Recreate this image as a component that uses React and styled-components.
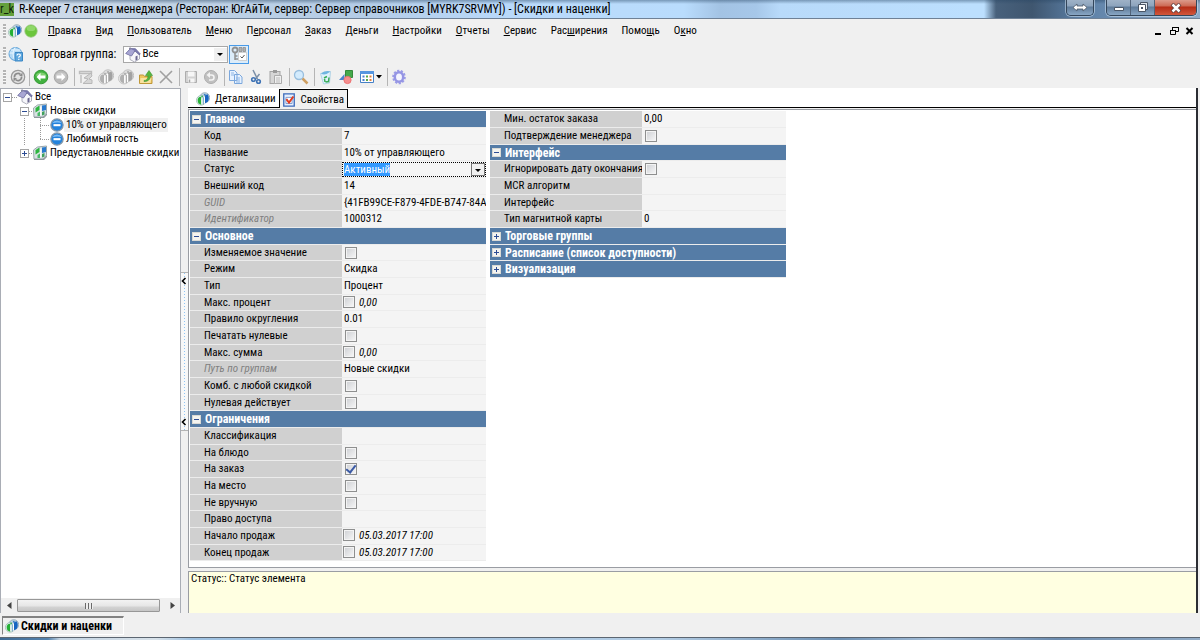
import React, { useState } from "react";
import styled, { createGlobalStyle, css } from "styled-components";

const colors = {
  face: "#f0f0f0",
  header: "#557ca6",
  name: "#d0d0d0",
  value: "#f4f4f4",
  hint: "#ffffe1",
  line: "#9a9da3",
};

const GlobalStyle = createGlobalStyle`
  * {
    box-sizing: border-box;
  }

  body {
    margin: 0;
    background: ${colors.face};
    color: #000;
    font-family: "Roboto Condensed", Roboto, "Liberation Sans", sans-serif;
    font-size: 11px;
    line-height: 14px;
  }

  button, input, select {
    font: inherit;
    color: inherit;
    margin: 0;
  }

  svg {
    flex: none;
  }
`;

const Window = styled.div`
  min-height: 100vh;
  display: flex;
  flex-direction: column;
  overflow: hidden;
`;

const TitleBar = styled.header`
  height: 19px;
  display: flex;
  flex: none;
  align-items: center;
  gap: 5px;
  border-bottom: 1px solid #6f8196;
  background:
    linear-gradient(180deg, rgba(40, 70, 100, 0.45) 0, rgba(255, 255, 255, 0) 4px),
    linear-gradient(90deg, #d3dfec 0%, #c3d4e6 12%, #b4cce6 30%, #b9d9fa 42%, #b9dcfd 57%,
      #a3c3e4 60%, #a6c7e9 63%, #b8dafa 65%, #bcdffe 81%, #bcdffe 82%, #48617c 83%, #3f566f 86%,
      #5b7fa6 90%, #8fabc8 100%);
`;

const AppBadge = styled.span`
  width: 14px;
  height: 13px;
  background: #64a03c;
  color: #10240a;
  font-size: 12px;
  line-height: 12px;
  overflow: hidden;
`;

const Title = styled.h1`
  flex: 1;
  margin: 0;
  font-size: 12px;
  font-weight: 400;
  line-height: 18px;
  white-space: nowrap;
`;

const Caption = styled.div`
  display: flex;
  align-self: flex-start;
  height: 16px;
  margin-right: ${(p) => p.$end || 0}px;
  border: 1px solid #34465a;
  border-top: 0;
  border-radius: 0 0 5px 5px;
  box-shadow: 0 0 0 1px rgba(220, 235, 250, 0.5);
  overflow: hidden;
`;

const CaptionButton = styled.button`
  width: ${(p) => p.$w}px;
  padding: 0;
  border: 0;
  border-right: 1px solid #52647a;
  background: linear-gradient(180deg, #9fb2c7 0, #8da4bd 6px, #5f7b99 7px, #88a6c4 100%);
  display: flex;
  align-items: center;
  justify-content: center;

  &:last-child {
    border-right: 0;
  }

  ${(p) =>
    p.$close &&
    css`
      background: linear-gradient(180deg, #dc9a8b 0, #cd6a55 6px, #b52c16 7px, #d1573c 100%);
    `}
`;

const MenuBar = styled.nav`
  height: 24px;
  display: flex;
  flex: none;
  align-items: center;
  padding: 0 4px 0 2px;
`;

const Grip = styled.span`
  width: 3px;
  height: 14px;
  margin: 0 2px 0 1px;
  background: repeating-linear-gradient(180deg, #b4b4b4 0 2px, #f8f8f8 2px 3px);
`;

const MenuIcons = styled.span`
  display: flex;
  align-items: center;
  gap: 2px;
  margin-right: 3px;
`;

const MenuItem = styled.button`
  padding: 0 7px;
  border: 0;
  background: none;
  line-height: 16px;
`;

const Spacer = styled.span`
  flex: 1;
`;

const ChildControls = styled.span`
  display: flex;
  gap: 4px;
`;

const PlainButton = styled.button`
  width: 12px;
  height: 12px;
  padding: 0;
  border: 0;
  background: none;
  display: flex;
`;

const GroupBar = styled.div`
  height: 22px;
  display: flex;
  flex: none;
  align-items: center;
  padding-left: 2px;
`;

const GroupLabel = styled.label`
  margin: 0 7px 0 8px;
  font-size: 12px;
`;

const SelectBox = styled.span`
  position: relative;
  width: 105px;
  height: 17px;
  display: flex;

  select {
    width: 100%;
    padding: 0 18px 0 18px;
    appearance: none;
    border: 1px solid #a8a8a8;
    border-radius: 0;
    background: #fff;
    line-height: 14px;
  }
`;

const SelectIcon = styled.span`
  position: absolute;
  top: 1px;
  left: 2px;
  pointer-events: none;
`;

const SelectArrow = styled.span`
  position: absolute;
  top: 2px;
  right: 1px;
  width: 13px;
  height: 13px;
  background: #f0f0f0;
  pointer-events: none;

  &::after {
    content: "";
    position: absolute;
    top: 5px;
    left: 3px;
    border: 3px solid transparent;
    border-top-color: #000;
    border-bottom: 0;
  }
`;

const PressedButton = styled.button`
  width: 20px;
  height: 19px;
  margin-left: 1px;
  padding: 0;
  border: 1px solid #4a9be8;
  background: #dcecf9;
  display: flex;
  align-items: center;
  justify-content: center;
`;

const ToolBar = styled.div`
  height: 23px;
  display: flex;
  flex: none;
  align-items: center;
  padding-left: 2px;
`;

const ToolGroup = styled.div`
  display: flex;
  padding-right: 1px;

  & + & {
    border-left: 1px solid #b5b5b5;
    padding: 0 3px 0 1px;
  }
`;

const ToolButton = styled.button`
  width: ${(p) => (p.$wide ? 28 : 20)}px;
  height: 18px;
  padding: 0;
  border: 0;
  background: none;
  display: flex;
  align-items: center;
  justify-content: center;
`;

const Main = styled.main`
  flex: 1;
  display: flex;
  padding-right: 2px;
`;

const Sidebar = styled.aside`
  width: 181px;
  flex: none;
  display: flex;
  flex-direction: column;
  justify-content: space-between;
  border: 1px solid #a9adb5;
  border-bottom: 0;
  background: #fff;
`;

const Tree = styled.ul`
  list-style: none;
  margin: 0;
  padding: 1px 0 0 2px;

  ul {
    list-style: none;
    margin: 0 0 0 7px;
    padding: 0 0 0 10px;
  }
`;

const TreeRow = styled.div`
  height: 14px;
  display: flex;
  align-items: center;
  white-space: nowrap;

  > * {
    flex: none;
  }
`;

const TreeToggle = styled.button`
  width: 9px;
  height: 9px;
  padding: 0;
  border: 0;
  background: none;
  display: flex;
`;

const Dots = styled.span`
  width: ${(p) => p.$w}px;
  height: 1px;
  background: repeating-linear-gradient(90deg, #999 0 1px, transparent 1px 2px);
`;

const Branch = styled.span`
  width: 10px;
  height: 14px;
  background:
    repeating-linear-gradient(90deg, #999 0 1px, transparent 1px 2px) 0 7px / 10px 1px no-repeat,
    repeating-linear-gradient(180deg, #999 0 1px, transparent 1px 2px) 0 0 / 1px
      ${(p) => (p.$last ? 7 : 14)}px no-repeat;
`;

const TreeChildren = styled.div`
  margin-left: 4px;
  padding-left: 16px;
  background: repeating-linear-gradient(180deg, #999 0 1px, transparent 1px 2px) 0 0 / 1px 100%
    no-repeat;
`;

const TreeLabel = styled.span`
  padding: 0 1px 0 2px;
  background: ${(p) => (p.$selected ? "#f0f0f0" : "none")};
`;

const ScrollRow = styled.div`
  height: 15px;
  display: flex;
  align-items: center;
  background: #f0f0f0;
`;

const ScrollArrow = styled.button`
  width: 16px;
  height: 14px;
  padding: 0;
  border: 0;
  background: none;
  display: flex;
  align-items: center;
  justify-content: center;
`;

const Thumb = styled.div`
  flex: 1;
  height: 13px;
  margin-right: 4px;
  border: 1px solid #979797;
  border-radius: 1px;
  background: linear-gradient(180deg, #f3f3f3 0, #e6e6e6 6px, #d3d3d3 7px, #c6c6c6 100%);
  display: flex;
  align-items: center;
  justify-content: center;

  &::after {
    content: "";
    width: 8px;
    height: 6px;
    background: repeating-linear-gradient(90deg, #6a6a6a 0 1px, #eee 1px 3px);
  }
`;

const Splitter = styled.div`
  width: 7px;
  flex: none;
  display: flex;
  flex-direction: column;
  justify-content: center;
  padding-top: 2px;
`;

const SplitHandle = styled.button`
  height: 159px;
  padding: 4px 0;
  border: 1px solid #b4b4b4;
  border-width: 1px 0;
  background:
    radial-gradient(circle, #8fc4f4 1px, transparent 1px) 1px 14px / 5px 3px repeat-y,
    #f8f8f8;
  display: flex;
  flex-direction: column;
  justify-content: space-between;
`;

const Content = styled.section`
  flex: 1;
  min-width: 0;
  display: flex;
  flex-direction: column;
  border-right: 2px solid #2b2d33;
`;

const Tabs = styled.div`
  height: 20px;
  flex: none;
  display: flex;
  align-items: flex-end;
  background: #fff;
  border-bottom: 1px solid #000;
`;

const Tab = styled.button`
  height: 18px;
  padding: 2px 3px 0 8px;
  border: 0;
  background: #fff;
  display: flex;
  align-items: center;
  gap: 5px;

  ${(p) =>
    p.$active &&
    css`
      height: 19px;
      margin-bottom: -1px;
      padding: 1px 3px 0 2px;
      border: 1px solid #000;
      border-bottom: 0;
      background: ${colors.face};
    `}
`;

const Properties = styled.div`
  flex: 1;
  margin-top: 1px;
  padding: 1px 0 0 1px;
  display: flex;
  align-items: flex-start;
  gap: 4px;
  background: #fff;
  border: 1px solid ${colors.line};
  border-right: 0;
`;

const Table = styled.table`
  width: 296px;
  table-layout: fixed;
  border-spacing: 0;

  tr {
    height: 17px;
  }

  tr:nth-child(3n) {
    height: 16px;
  }

  th,
  td {
    padding: 0;
    text-align: left;
    line-height: 14px;
    white-space: nowrap;
    overflow: hidden;
    border-bottom: 1px solid #ececec;
  }
`;

const NameColumn = styled.col`
  width: 152px;
`;

const SectionCell = styled.th`
  background: ${colors.header};
  color: #fff;
`;

const SectionToggle = styled.button`
  width: 100%;
  height: 14px;
  padding: 0 0 0 2px;
  border: 0;
  background: none;
  color: inherit;
  font-size: 12px;
  font-weight: 700;
  line-height: 14px;
  display: flex;
  align-items: center;
  gap: 4px;
`;

const NameCell = styled.th`
  background: ${colors.name};
  font-weight: 400;

  label,
  span {
    display: block;
    padding-left: 14px;
  }

  ${(p) =>
    p.$readonly &&
    css`
      color: #808080;
      font-style: italic;
    `}
`;

const ValueCell = styled.td`
  background: ${colors.value};
`;

const ValueText = styled.span`
  display: block;
  padding-left: 2px;
  overflow: hidden;
`;

const CheckValue = styled.div`
  display: flex;
  align-items: flex-start;
  gap: 4px;
  padding-left: ${(p) => (p.$text ? 1 : 3)}px;
  font-style: italic;
`;

const Check = styled.input`
  appearance: none;
  width: 12px;
  height: 12px;
  border: 1px solid #8e8f8f;
  background: linear-gradient(135deg, #cdcfd3, #f8f8f8);
  box-shadow: inset 0 0 0 1px #f4f4f4;
  display: flex;
  align-items: center;
  justify-content: center;

  &:checked::after {
    content: "";
    width: 4px;
    height: 8px;
    margin-bottom: 2px;
    border: solid #3b5aa5;
    border-width: 0 2px 2px 0;
    transform: rotate(38deg);
  }
`;

const StatusField = styled.div`
  position: relative;
  display: flex;
  height: 15px;
  outline: 1px dotted #000;
  outline-offset: -1px;

  select {
    width: 100%;
    height: 15px;
    padding: 0;
    appearance: none;
    border: 0;
    background: none;
    color: transparent;
  }
`;

const SelectedText = styled.span`
  position: absolute;
  top: 1px;
  left: 2px;
  height: 13px;
  line-height: 13px;
  background: #3399ff;
  color: #fff;
  pointer-events: none;
`;

const DropMark = styled.span`
  position: absolute;
  right: 1px;
  top: 1px;
  width: 14px;
  height: 13px;
  border: 1px solid #777;
  background: #f0f0f0;
  display: flex;
  align-items: center;
  justify-content: center;
  pointer-events: none;

  &::after {
    content: "";
    margin-top: 2px;
    border: 3px solid transparent;
    border-top-color: #000;
    border-bottom: 0;
  }
`;

const Hint = styled.div`
  height: 42px;
  flex: none;
  margin-top: 3px;
  padding: 0 2px;
  background: ${colors.hint};
  border: 1px solid ${colors.line};
  border-width: 1px 0 0 1px;
`;

const WindowBar = styled.footer`
  height: 24px;
  flex: none;
  padding: 3px 2px;
`;

const WindowTab = styled.button`
  width: 122px;
  height: 19px;
  padding: 1px 2px;
  border: 1px solid #fff;
  border-top: 2px solid #828282;
  border-left: 1px solid #828282;
  background: #f0f0f0;
  font-size: 12px;
  font-weight: 700;
  display: flex;
  align-items: center;
  gap: 2px;
`;

const Taskbar = styled.div`
  height: 3px;
  flex: none;
  border-top: 1px solid #5c6671;
  background: linear-gradient(90deg, #3e6a94 0, #5482ad 4%, #c4d4e2 5%, #d8e2ea 13%, #9fc2e2 16%,
    #b4cde4 55%, #6e91b4 70%, #a7c0da 78%, #6c8caf 88%, #93adc8 100%);
`;

const Svg = ({ size = 16, children, ...rest }) => (
  <svg width={size} height={size} viewBox="0 0 16 16" fill="none" aria-hidden="true" {...rest}>
    {children}
  </svg>
);

const PairIcon = ({ gray, size = 16 }) => (
  <Svg size={size}>
    <circle cx="10" cy="6.500" r="5.700" fill={gray ? "#dedede" : "#c3d8e4"} stroke={gray ? "#c0c0c0" : "#93a9b8"} />
    <circle cx="6" cy="9.500" r="5.500" fill={gray ? "#e6e6e6" : "#dcefe8"} stroke={gray ? "#c6c6c6" : "#a3bdb9"} />
    <path d="M5 5.500C2 5.500 1 10 3 13l3 1.500V6z" fill={gray ? "#b0b0b0" : "#25b035"} />
    <path d="M10 4l3-1.500c2 1.500 2 6 .5 8.500L10 13z" fill={gray ? "#a2a2a2" : "#1765c1"} />
    <path d="M7 7v7M9.500 5v8" stroke="#fff" strokeWidth="1.500" />
    <path d="M8.300 6v8" stroke={gray ? "#999" : "#3f7fae"} strokeWidth=".9" />
    <circle cx="7" cy="5" r="1.100" fill={gray ? "#aaa" : "#3fae6d"} />
    <circle cx="10" cy="3" r="1.100" fill={gray ? "#aaa" : "#3c7ec4"} />
  </Svg>
);

const FolderPairIcon = () => (
  <Svg>
    <path d="M1.500 5l4-3L14.500 1v9l-3.500 4H2z" fill="#d9e2e4" stroke="#9aa6ac" />
    <path d="M2 14h9.500l3.500-4v2l-3 3H2z" fill="#8d989c" />
    <path d="M3.500 5l4-2.500V7l-4 2.500z" fill="#2db53f" />
    <path d="M10 2.500l4-.5v5l-4 1z" fill="#2879ce" />
    <path d="M5.500 10l2.500-1.500V13H5.500z" fill="#49b868" />
    <path d="M10 9l2.500-1v3.500L10 12.500z" fill="#3fa05c" />
    <path d="M8.800 3.500v9" stroke="#fff" strokeWidth="1.300" />
  </Svg>
);

const HouseIcon = () => (
  <Svg>
    <path d="M5 8v4.500L9.500 15l5-3V7L10 4z" fill="#f6f6fa" stroke="#9a9cab" strokeWidth=".8" />
    <path d="M.7 6.500L5.500 1.500l5 .2 4.800 5.300-1.300.8-4-4L6.500 9z" fill="#7c7ab0" stroke="#5f5e93" strokeWidth=".7" />
    <path d="M1.200 6.300l4.500-4.300 3.800 1.700-3.200 5z" fill="#a8a6d3" />
    <path d="M10.500 9.500l2-1v4.200l-2 1.100z" fill="#6a6790" />
    <path d="M4 .8l2-.3v1.800L4 3z" fill="#85849f" />
  </Svg>
);

const MinusBallIcon = () => (
  <Svg size={14}>
    <circle cx="8" cy="8" r="7" fill="#2483dc" stroke="#8297aa" strokeWidth="1.500" />
    <path d="M2.500 6a6 5 0 0 1 11 0q-5-2-11 0z" fill="#7bbcf5" />
    <rect x="4" y="7" width="8" height="2.400" fill="#fff" />
  </Svg>
);

const BallIcon = () => (
  <Svg size={14}>
    <circle cx="8" cy="8" r="7" fill="#6cc63c" stroke="#8cc56e" />
    <ellipse cx="8" cy="5" rx="5" ry="3" fill="#8fd868" />
  </Svg>
);

const HelpGlobeIcon = () => (
  <Svg>
    <circle cx="7.500" cy="8" r="6.500" fill="#b4daf5" stroke="#5fa2d8" />
    <path d="M1.500 7h11M7 1.500q-4 6 0 13M3 4h9" stroke="#e7f5ff" />
    <path d="M7 6.500h7.500V15H7z" fill="#5ea8df" stroke="#3a86c4" />
    <path d="M9 9.500q0-1.500 1.700-1.500t1.600 1.500q0 .8-1.500 1.600v.7M10.800 12.800v1.200" stroke="#fff" strokeWidth="1.200" />
  </Svg>
);

const KeyCheckIcon = () => (
  <Svg>
    <circle cx="4" cy="4" r="2.500" stroke="#909090" strokeWidth="1.800" />
    <path d="M4 7v7M4 10h2.500M4 13h3" stroke="#909090" strokeWidth="1.500" />
    <path d="M8 1.500h3v4H8zM12 1.500h2.500v4H12z" fill="#b0b0b0" stroke="#8f8f8f" strokeWidth=".8" />
    <rect x="7.500" y="6.500" width="8" height="8" fill="#fff" stroke="#d2d2d2" />
    <path d="M9.500 10.500l1.500 1.500 2.500-3" stroke="#555" />
  </Svg>
);

const RefreshIcon = () => (
  <Svg>
    <circle cx="8" cy="8" r="6.700" fill="#e4e4e4" stroke="#9a9a9a" strokeWidth="1.300" />
    <path d="M4.500 8.500a3.500 3.500 0 0 1 6-3M11.500 7.500a3.500 3.500 0 0 1-6 3" stroke="#8b8b8b" strokeWidth="1.700" />
    <path d="M9 7h3.500V3.500zM7 9H3.500v3.500z" fill="#8b8b8b" />
  </Svg>
);

const ArrowBallIcon = ({ back }) => (
  <Svg>
    <circle cx="8" cy="8" r="6.800" fill={back ? "#42b13f" : "#bababa"} stroke={back ? "#359a35" : "#a6a6a6"} />
    <path d="M2.500 6.500a6 5 0 0 1 11 0q-5 1-11 0z" fill={back ? "#7fd06f" : "#cccccc"} />
    <path
      d={back ? "M3.500 8l4-4v2.500h5v3h-5V12z" : "M12.500 8l-4-4v2.500h-5v3h5V12z"}
      fill="#fff"
    />
  </Svg>
);

const TreeGrayIcon = () => (
  <Svg>
    <path d="M1.500 2.500h12v2h-12zM3 6v8" stroke="#bdbdbd" strokeWidth="1.400" />
    <path d="M13 4L6 9l4 1-5 4.500h9V11l-3-1 3-3z" fill="#d6d6d6" stroke="#b8b8b8" />
  </Svg>
);

const UpFolderIcon = () => (
  <Svg>
    <path d="M1.500 6h4l1 1.500h7.500v7h-12.500z" fill="#f0c760" stroke="#bf983a" />
    <path d="M2.500 9h11l-1 5H2z" fill="#f9e2a0" />
    <path d="M6 11.500c3 0 4-2 4-5H7.500L11 1.500l3.500 5H12.500c0 4-2.500 6-6.500 6z" fill="#55b83c" stroke="#3c9030" strokeWidth=".6" />
  </Svg>
);

const CrossIcon = () => (
  <Svg>
    <path d="M2 2l12 12M14 2L2 14" stroke="#a0a0a0" strokeWidth="1.600" />
  </Svg>
);

const SaveIcon = () => (
  <Svg>
    <path d="M2.500 2.500h11v11h-11z" fill="#d3d3d3" stroke="#adadad" />
    <path d="M5 2.500h6.500v5H5zM5 9.500h6.500v4H5z" fill="#f6f6f6" />
    <path d="M6.500 10.500v3" stroke="#a5a5a5" strokeWidth="1.500" />
  </Svg>
);

const UndoIcon = () => (
  <Svg>
    <circle cx="8" cy="8" r="6.500" fill="#c0c0c0" stroke="#adadad" />
    <path d="M6 11h2.500a2.500 2.500 0 0 0 0-5H5" stroke="#f3f3f3" strokeWidth="1.600" />
    <path d="M7 3v6L3.500 6z" fill="#f3f3f3" />
  </Svg>
);

const CopyIcon = () => (
  <Svg>
    <path d="M1.500 1.500h5l2.500 2.500v7.500h-7.500zM6.500 5.500h5l2.500 2.500v6.500h-7.500z" fill="#e6f1ff" stroke="#7ba7dc" />
    <path d="M3 4h3M3 6h3M8 9h4M8 11h4M8 13h4" stroke="#8db5e4" />
  </Svg>
);

const CutIcon = () => (
  <Svg>
    <path d="M5 1l4.500 9M11.500 5L7.500 10" stroke="#7c90a8" strokeWidth="1.500" />
    <circle cx="5.500" cy="10.500" r="1.800" stroke="#3f73b5" strokeWidth="1.600" />
    <circle cx="10.500" cy="12.500" r="1.800" stroke="#3f73b5" strokeWidth="1.600" />
  </Svg>
);

const PasteIcon = () => (
  <Svg>
    <rect x="2" y="2.500" width="10" height="12" fill="#d6d6d6" stroke="#a4a4a4" />
    <path d="M5 1h4v3H5z" fill="#9a9a9a" />
    <path d="M6.500 6.500h7v8h-7z" fill="#f0f0f0" stroke="#acacac" />
    <path d="M8 9h4M8 11h4M8 13h4" stroke="#bbb" />
  </Svg>
);

const SearchIcon = () => (
  <Svg>
    <circle cx="6" cy="6" r="4.500" fill="#d3ebfd" stroke="#98bede" strokeWidth="1.300" />
    <path d="M9.500 9.500l5 5" stroke="#cf9f62" strokeWidth="2.500" />
  </Svg>
);

const RecycleIcon = () => (
  <Svg>
    <path d="M2.500 4.500l10-2-1 11.500-6 1z" fill="#dff1fb" stroke="#b4d4e6" />
    <path d="M3 4.500q4 2.500 9.500-2-5-1.500-9.500 2z" fill="#6fb5e0" />
    <path d="M6 9l3-1.500M11 8.500l-.5 4-3 .5M6.500 10l.5 3" stroke="#3aae58" strokeWidth="1.500" />
  </Svg>
);

const ShapesIcon = () => (
  <Svg>
    <path d="M7.500 1.500h7v7h-7z" fill="#45a84b" stroke="#35893a" />
    <path d="M1 11l5.500-6v6z" fill="#4a80cd" />
    <circle cx="9.500" cy="11" r="3.600" fill="#f58e8e" stroke="#ee7272" />
  </Svg>
);

const GridIcon = () => (
  <Svg>
    <path d="M1.500 2.500h13v11h-13z" fill="#fff" stroke="#4681c6" />
    <path d="M1 2h14v3H1z" fill="#5596e0" />
    <path d="M3.500 6.500h2v2h-2zM3.500 10h2v2h-2z" fill="#4b7fd1" />
    <path d="M7 6.500h2v2H7zM7 10h2v2H7z" fill="#56a94a" />
    <path d="M10.500 6.500h2v2h-2zM10.500 10h2v2h-2z" fill="#e3803c" />
  </Svg>
);

const GearIcon = () => (
  <Svg>
    <ellipse cx="8" cy="8" rx="5.800" ry="6.300" stroke="#9c9ce6" strokeWidth="2" strokeDasharray="2.200 1.500" />
    <ellipse cx="8" cy="8" rx="4.200" ry="4.800" fill="#f4f4ff" stroke="#9595e4" strokeWidth="2.500" />
  </Svg>
);

const FormCheckIcon = () => (
  <Svg size={14}>
    <path d="M2 1h12v14H2z" fill="#e5efff" stroke="#3c6bbb" strokeWidth="1.500" />
    <path d="M4.500 5h7v7h-7z" fill="#fff" stroke="#7190c8" />
    <path d="M5 7l3 4 5-7" stroke="#e23b1f" strokeWidth="2.200" />
  </Svg>
);

const ToggleIcon = ({ open, boxed }) => (
  <svg width="9" height="9" viewBox="0 0 9 9" aria-hidden="true">
    <rect x=".5" y=".5" width="8" height="8" fill={boxed ? "#f4f4f0" : "#fff"} stroke={boxed ? "#d9d9d4" : "#a5a5a5"} />
    <path d="M2 4.500h5" stroke="#2d4c94" />
    {!open && <path d="M4.500 2v5" stroke="#2d4c94" />}
  </svg>
);

const Chevron = () => (
  <svg width="6" height="8" viewBox="0 0 6 8" fill="none" aria-hidden="true">
    <path d="M4.500 1L1.500 4l3 3" stroke="#000" strokeWidth="1.600" />
  </svg>
);

const menu = [
  ["", "П", "равка"],
  ["", "В", "ид"],
  ["", "П", "ользователь"],
  ["", "М", "еню"],
  ["П", "е", "рсонал"],
  ["", "З", "аказ"],
  ["", "Д", "еньги"],
  ["", "Н", "астройки"],
  ["", "О", "тчеты"],
  ["", "С", "ервис"],
  ["Рас", "ш", "ирения"],
  ["Помо", "щ", "ь"],
  ["О", "к", "но"],
];

const tools = [
  [["Обновить", <RefreshIcon />]],
  [["Назад", <ArrowBallIcon back />], ["Вперед", <ArrowBallIcon />]],
  [
    ["Дерево", <TreeGrayIcon />],
    ["Создать", <PairIcon gray />],
    ["Создать копию", <PairIcon gray />],
    ["На уровень выше", <UpFolderIcon />],
    ["Удалить", <CrossIcon />],
  ],
  [["Сохранить", <SaveIcon />], ["Отменить", <UndoIcon />]],
  [["Копировать", <CopyIcon />], ["Вырезать", <CutIcon />], ["Вставить", <PasteIcon />]],
  [["Найти", <SearchIcon />]],
  [["Корзина", <RecycleIcon />], ["Фигуры", <ShapesIcon />], ["Таблица", <GridIcon />, true]],
  [["Настройка", <GearIcon />]],
];

const leftRows = [
  { section: "Главное", open: true },
  { name: "Код", value: "7" },
  { name: "Название", value: "10% от управляющего" },
  { name: "Статус", status: "Активный" },
  { name: "Внешний код", value: "14" },
  { name: "GUID", value: "{41FB99CE-F879-4FDE-B747-84A", readonly: true },
  { name: "Идентификатор", value: "1000312", readonly: true },
  { section: "Основное", open: true },
  { name: "Изменяемое значение", check: true },
  { name: "Режим", value: "Скидка" },
  { name: "Тип", value: "Процент" },
  { name: "Макс. процент", check: true, value: "0,00" },
  { name: "Правило округления", value: "0.01" },
  { name: "Печатать нулевые", check: true },
  { name: "Макс. сумма", check: true, value: "0,00" },
  { name: "Путь по группам", value: "Новые скидки", readonly: true },
  { name: "Комб. с любой скидкой", check: true },
  { name: "Нулевая действует", check: true },
  { section: "Ограничения", open: true },
  { name: "Классификация" },
  { name: "На блюдо", check: true },
  { name: "На заказ", check: true, checked: true },
  { name: "На место", check: true },
  { name: "Не вручную", check: true },
  { name: "Право доступа" },
  { name: "Начало продаж", check: true, value: "05.03.2017 17:00" },
  { name: "Конец продаж", check: true, value: "05.03.2017 17:00" },
];

const rightRows = [
  { name: "Мин. остаток заказа", value: "0,00" },
  { name: "Подтверждение менеджера", check: true },
  { section: "Интерфейс", open: true },
  { name: "Игнорировать дату окончания", check: true },
  { name: "MCR алгоритм" },
  { name: "Интерфейс" },
  { name: "Тип магнитной карты", value: "0" },
  { section: "Торговые группы" },
  { section: "Расписание (список доступности)" },
  { section: "Визуализация" },
];

const Value = ({ row, id }) => {
  if (row.status) {
    return (
      <StatusField>
        <select id={id}>
          <option>{row.status}</option>
        </select>
        <SelectedText aria-hidden="true">{row.status}</SelectedText>
        <DropMark />
      </StatusField>
    );
  }
  if (row.check) {
    return (
      <CheckValue $text={row.value}>
        <Check type="checkbox" id={id} defaultChecked={row.checked} />
        {row.value}
      </CheckValue>
    );
  }
  return <ValueText>{row.value}</ValueText>;
};

const PropertyTable = ({ rows, prefix }) => (
  <Table>
    <colgroup>
      <NameColumn />
      <col />
    </colgroup>
    <tbody>
      {rows.map((row, i) => {
        const id = `${prefix}-${i}`;
        if (row.section) {
          return (
            <tr key={id}>
              <SectionCell colSpan={2}>
                <SectionToggle aria-expanded={!!row.open}>
                  <ToggleIcon open={row.open} boxed />
                  {row.section}
                </SectionToggle>
              </SectionCell>
            </tr>
          );
        }
        return (
          <tr key={id}>
            <NameCell scope="row" $readonly={row.readonly}>
              {row.check || row.status ? (
                <label htmlFor={id}>{row.name}</label>
              ) : (
                <span>{row.name}</span>
              )}
            </NameCell>
            <ValueCell>
              <Value row={row} id={id} />
            </ValueCell>
          </tr>
        );
      })}
    </tbody>
  </Table>
);

const App = () => {
  const [tab, setTab] = useState("properties");

  return (
    <>
      <GlobalStyle />
      <Window>
        <TitleBar>
          <AppBadge>r_k</AppBadge>
          <Title>
            R-Keeper 7 станция менеджера (Ресторан: ЮгАйТи, сервер: Сервер справочников
            [MYRK7SRVMY]) - [Скидки и наценки]
          </Title>
          <Caption $end={7}>
            <CaptionButton $w={26} aria-label="Развернуть на экраны">
              <svg width="16" height="9" viewBox="0 0 16 9">
                <path d="M1 4.500l4-3.500v2h6V1l4 3.500L11 8V6H5v2z" fill="#fff" stroke="#4a5666" strokeWidth=".8" />
              </svg>
            </CaptionButton>
          </Caption>
          <Caption $end={3}>
            <CaptionButton $w={24} aria-label="Свернуть">
              <svg width="12" height="9" viewBox="0 0 12 9">
                <path d="M1.500 4.500h9v3h-9z" fill="#fff" stroke="#4a5666" />
              </svg>
            </CaptionButton>
            <CaptionButton $w={24} aria-label="Восстановить">
              <svg width="12" height="11" viewBox="0 0 12 11">
                <path d="M3.500.5h7v7h-7z" fill="#dfe6ee" stroke="#4a5666" />
                <path d="M1.500 2.500h7v7h-7z" fill="#fff" stroke="#4a5666" />
                <path d="M4 5h2v2H4z" fill="#4a5666" />
              </svg>
            </CaptionButton>
            <CaptionButton $w={41} $close aria-label="Закрыть">
              <svg width="12" height="10" viewBox="0 0 12 10" fill="none">
                <path d="M2 1l8 8M10 1L2 9" stroke="#5c3a3a" strokeWidth="4" />
                <path d="M2.500 1.500l7 7M9.500 1.500l-7 7" stroke="#fff" strokeWidth="2.500" />
              </svg>
            </CaptionButton>
          </Caption>
        </TitleBar>

        <MenuBar>
          <Grip />
          <MenuIcons>
            <PairIcon size={14} />
            <BallIcon />
          </MenuIcons>
          {menu.map(([before, key, after]) => (
            <MenuItem key={before + key + after}>
              {before}
              <u>{key}</u>
              {after}
            </MenuItem>
          ))}
          <Spacer />
          <ChildControls>
            <PlainButton aria-label="Свернуть окно">
              <svg width="12" height="12" viewBox="0 0 12 12">
                <path d="M3 8h6v2H3z" />
              </svg>
            </PlainButton>
            <PlainButton aria-label="Восстановить окно">
              <svg width="12" height="12" viewBox="0 0 12 12" fill="none" stroke="#000">
                <path d="M4.500 5V2.500h6v4H8M4 2.500h7M2.500 5.500h5v4h-5zM2 5.500h6" />
              </svg>
            </PlainButton>
            <PlainButton aria-label="Закрыть окно">
              <svg width="12" height="12" viewBox="0 0 12 12" stroke="#000" strokeWidth="2">
                <path d="M2.500 3l6 6M8.500 3l-6 6" />
              </svg>
            </PlainButton>
          </ChildControls>
        </MenuBar>

        <GroupBar>
          <Grip />
          <HelpGlobeIcon />
          <GroupLabel htmlFor="group">Торговая группа:</GroupLabel>
          <SelectBox>
            <select id="group">
              <option>Все</option>
            </select>
            <SelectIcon>
              <HouseIcon />
            </SelectIcon>
            <SelectArrow />
          </SelectBox>
          <PressedButton aria-label="Фильтр по группе">
            <KeyCheckIcon />
          </PressedButton>
        </GroupBar>

        <ToolBar>
          <Grip />
          {tools.map((group, i) => (
            <ToolGroup key={i}>
              {group.map(([label, icon, wide]) => (
                <ToolButton key={label} aria-label={label} $wide={wide}>
                  {icon}
                  {wide && (
                    <svg width="7" height="4" viewBox="0 0 7 4">
                      <path d="M1 0h6L4 3.500z" />
                    </svg>
                  )}
                </ToolButton>
              ))}
            </ToolGroup>
          ))}
        </ToolBar>

        <Main>
          <Sidebar>
            <Tree>
              <li>
                <TreeRow>
                  <TreeToggle aria-label="Свернуть ветку">
                    <ToggleIcon open />
                  </TreeToggle>
                  <Dots $w={5} />
                  <HouseIcon />
                  <TreeLabel>Все</TreeLabel>
                </TreeRow>
                <ul>
                  <li>
                    <TreeRow>
                      <TreeToggle aria-label="Свернуть ветку">
                        <ToggleIcon open />
                      </TreeToggle>
                      <Dots $w={3} />
                      <FolderPairIcon />
                      <TreeLabel>Новые скидки</TreeLabel>
                    </TreeRow>
                    <TreeChildren>
                      <TreeRow>
                        <Branch />
                        <MinusBallIcon />
                        <TreeLabel $selected>10% от управляющего</TreeLabel>
                      </TreeRow>
                      <TreeRow>
                        <Branch $last />
                        <MinusBallIcon />
                        <TreeLabel>Любимый гость</TreeLabel>
                      </TreeRow>
                    </TreeChildren>
                  </li>
                  <li>
                    <TreeRow>
                      <TreeToggle aria-label="Развернуть ветку">
                        <ToggleIcon />
                      </TreeToggle>
                      <Dots $w={3} />
                      <FolderPairIcon />
                      <TreeLabel>Предустановленные скидки</TreeLabel>
                    </TreeRow>
                  </li>
                </ul>
              </li>
            </Tree>
            <ScrollRow>
              <ScrollArrow aria-label="Влево">
                <svg width="5" height="7" viewBox="0 0 5 7">
                  <path d="M4.500 0v7L0 3.500z" fill="#444" />
                </svg>
              </ScrollArrow>
              <Thumb />
              <ScrollArrow aria-label="Вправо">
                <svg width="5" height="7" viewBox="0 0 5 7">
                  <path d="M.5 0v7L5 3.500z" fill="#444" />
                </svg>
              </ScrollArrow>
            </ScrollRow>
          </Sidebar>

          <Splitter>
            <SplitHandle aria-label="Скрыть панель">
              <Chevron />
              <Chevron />
            </SplitHandle>
          </Splitter>

          <Content>
            <Tabs role="tablist">
              <Tab role="tab" aria-selected={tab === "details"} $active={tab === "details"} onClick={() => setTab("details")}>
                <PairIcon size={14} />
                Детализации
              </Tab>
              <Tab role="tab" aria-selected={tab === "properties"} $active={tab === "properties"} onClick={() => setTab("properties")}>
                <FormCheckIcon />
                Свойства
              </Tab>
            </Tabs>
            <Properties>
              <PropertyTable rows={leftRows} prefix="main" />
              <PropertyTable rows={rightRows} prefix="extra" />
            </Properties>
            <Hint>Статус:: Статус элемента</Hint>
          </Content>
        </Main>

        <WindowBar>
          <WindowTab>
            <PairIcon size={14} />
            Скидки и наценки
          </WindowTab>
        </WindowBar>
        <Taskbar />
      </Window>
    </>
  );
};

export default App;
